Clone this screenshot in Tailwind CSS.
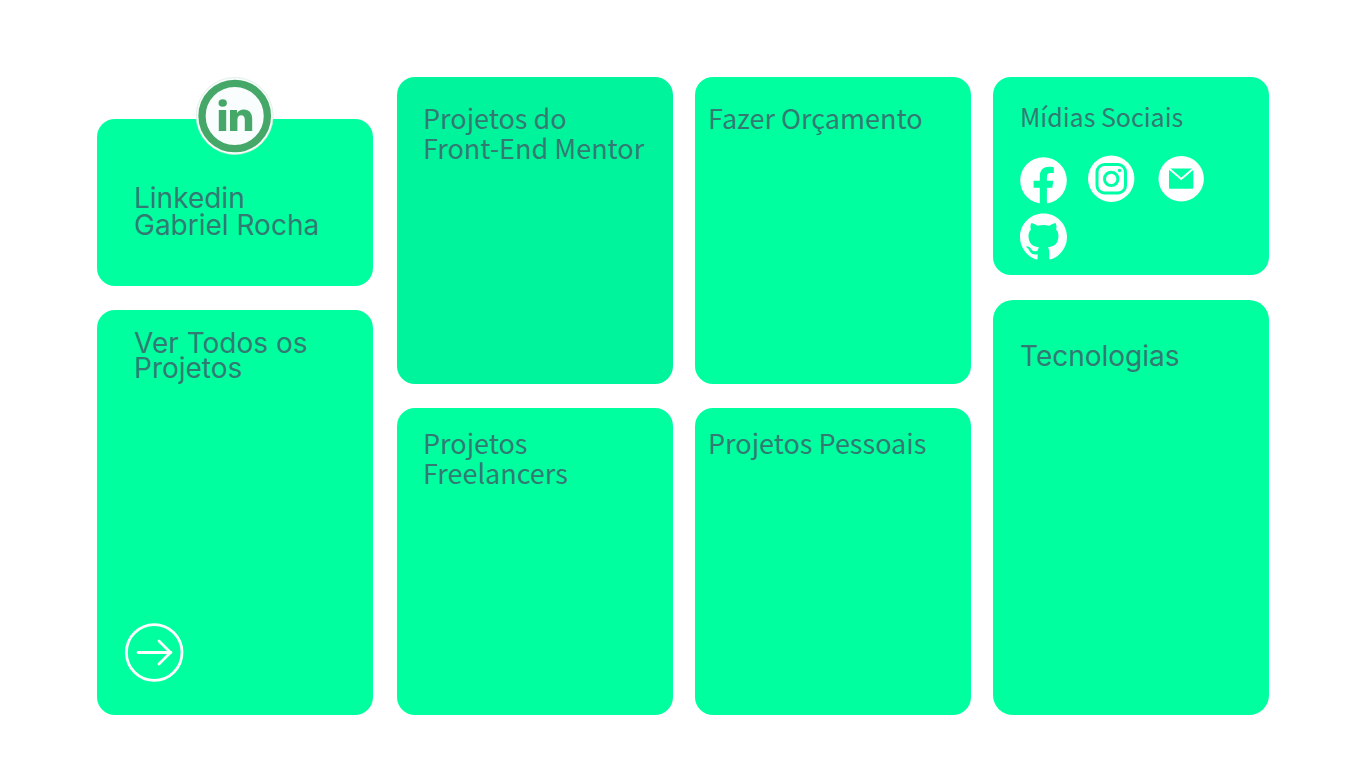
<!DOCTYPE html>
<html lang="pt-BR">
<head>
<meta charset="utf-8">
<meta name="viewport" content="width=device-width, initial-scale=1">
<title>Gabriel Rocha</title>
<script src="https://cdn.jsdelivr.net/npm/@tailwindcss/browser@4"></script>
</head>
<body class="bg-white text-[#337a72] text-[27px] font-['Noto_Sans_CJK_JP',sans-serif]">
<main class="flex min-h-screen gap-[22px] px-[97px] pt-[77px] pb-[53px]">
  <div class="mr-0.5 flex flex-1 flex-col gap-6 text-[28px] font-['Inter',sans-serif]">
    <section class="relative mt-[42px] h-[167px] rounded-[18px] bg-[#00ff9f] px-[37px] pt-[66px]">
      <a href="#linkedin" aria-label="Linkedin" class="absolute -top-[42px] left-1/2 -translate-x-1/2">
        <svg width="78" height="78" viewBox="0 0 78 78">
          <circle cx="38.700" cy="39" r="38.5" fill="#f8fcfb" stroke="#cfe6d8" stroke-width="0.6"/>
          <circle cx="38.700" cy="39" r="32.7" fill="#f9fdfe" stroke="#45a868" stroke-width="7.3"/>
          <g fill="#45a868"><ellipse cx="26.7" cy="26" rx="4.2" ry="3.8"/><path d="M22.800 33h7.400v21h-7.400zM34 33h7v3c1.500-2.400 3.700-3.600 6.700-3.600 5.600 0 8.500 3.600 8.500 9.600v12h-7.400V42.700c0-2.800-1.200-4.500-3.600-4.500s-3.800 1.700-3.800 4.500V54H34z"/></g>
        </svg>
      </a>
      <h2 class="leading-[27px]">Linkedin<br>Gabriel Rocha</h2>
    </section>
    <section class="flex flex-1 flex-col justify-between rounded-[18px] bg-[#00ff9f] px-[37px] pt-[21px] pb-[33px]">
      <h2 class="leading-[25px]">Ver Todos os<br>Projetos</h2>
      <a href="#projetos" aria-label="Ver todos os projetos" class="-ml-[9px] self-start">
        <svg width="59" height="59" viewBox="0 0 59 59" fill="none" stroke="#fff" stroke-width="2.800" stroke-linecap="round" stroke-linejoin="round"><circle cx="29.200" cy="29.500" r="27.800"/><path d="M13 29.500h33M34 18l11.500 11.500L34 41"/></svg>
      </a>
    </section>
  </div>
  <div class="grid flex-1 grid-rows-2 gap-6">
    <section class="rounded-[18px] bg-[#00f49c] pl-[26px] pr-4 pt-[26px]"><h2 class="leading-[30px]">Projetos do<br>Front-End Mentor</h2></section>
    <section class="rounded-[18px] bg-[#00ff9f] pl-[26px] pr-4 pt-5"><h2 class="leading-[30px]">Projetos<br>Freelancers</h2></section>
  </div>
  <div class="grid flex-1 grid-rows-2 gap-6">
    <section class="rounded-[18px] bg-[#00ff9f] px-[13px] pt-[26px]"><h2 class="leading-[30px]">Fazer Orçamento</h2></section>
    <section class="rounded-[18px] bg-[#00ff9f] px-[13px] pt-5"><h2 class="leading-[30px]">Projetos Pessoais</h2></section>
  </div>
  <div class="flex flex-1 flex-col gap-[25px]">
    <section class="h-[198px] rounded-[18px] bg-[#00ffa4] px-[27px] pt-6">
      <h2 class="text-[25px] leading-[30px]">Mídias Sociais</h2>
      <nav class="mt-6 grid grid-cols-[47px_47px_47px] gap-x-[22px] gap-y-[9px]">
        <a href="#facebook" aria-label="Facebook" class="pt-0.5"><svg width="47" height="47" viewBox="0 0 47 47"><circle cx="23.500" cy="23.500" r="23.300" fill="#fff"/><path fill="#00ffa4" d="M19.800 47V30.800h-6.200v-7h6.200v-4.500c0-6.400 3.900-9.500 9.500-9.500 1.900 0 3.600.2 4.500.4v5.700h-3.200c-2.700 0-3.700 1.500-3.700 3.700v4.200h6.400l-1 7h-5.400V47z"/></svg></a>
        <a href="#instagram" aria-label="Instagram"><svg width="47" height="47" viewBox="0 0 47 47" class="overflow-visible"><circle cx="22.200" cy="23.700" r="23.200" fill="#fff"/><g fill="none" stroke="#00ffa4" stroke-width="3"><rect x="8" y="9.500" width="28.500" height="28.500" rx="7.500"/><circle cx="22.200" cy="23.900" r="6.700"/></g><circle cx="30.600" cy="15.500" r="1.800" fill="#00ffa4"/></svg></a>
        <a href="#email" aria-label="E-mail"><svg width="47" height="47" viewBox="0 0 47 47"><circle cx="23.200" cy="23.700" r="22.700" fill="#fff"/><rect x="11" y="13.500" width="24.300" height="20.300" rx="1" fill="#00ffa4"/><path d="M11 13.500l12.200 10.500 12.200-10.500" fill="none" stroke="#fff" stroke-width="2"/></svg></a>
        <a href="#github" aria-label="GitHub"><svg width="47" height="47" viewBox="0 0 24 24" fill="#fbfdff"><path d="M12 .297c-6.630 0-12 5.373-12 12 0 5.303 3.438 9.800 8.205 11.385.6.113.82-.258.82-.577 0-.285-.01-1.040-.015-2.040-3.338.724-4.042-1.610-4.042-1.610C4.422 18.070 3.633 17.700 3.633 17.700c-1.087-.744.084-.729.084-.729 1.205.084 1.838 1.236 1.838 1.236 1.070 1.835 2.809 1.305 3.495.998.108-.776.417-1.305.760-1.605-2.665-.3-5.466-1.332-5.466-5.930 0-1.310.465-2.380 1.235-3.220-.135-.303-.54-1.523.105-3.176 0 0 1.005-.322 3.300 1.230.960-.267 1.980-.399 3-.405 1.020.006 2.040.138 3 .405 2.280-1.552 3.285-1.230 3.285-1.230.645 1.653.24 2.873.12 3.176.765.840 1.230 1.910 1.230 3.220 0 4.610-2.805 5.625-5.475 5.920.42.360.810 1.096.810 2.220 0 1.606-.015 2.896-.015 3.286 0 .315.210.690.825.570C20.565 22.092 24 17.592 24 12.297c0-6.627-5.373-12-12-12"/></svg></a>
      </nav>
    </section>
    <section class="flex-1 rounded-[20px] bg-[#00ff9f] px-[27px] pt-[41px] text-[28px] font-['Inter',sans-serif]"><h2 class="leading-[30px]">Tecnologias</h2></section>
  </div>
</main>
</body>
</html>
